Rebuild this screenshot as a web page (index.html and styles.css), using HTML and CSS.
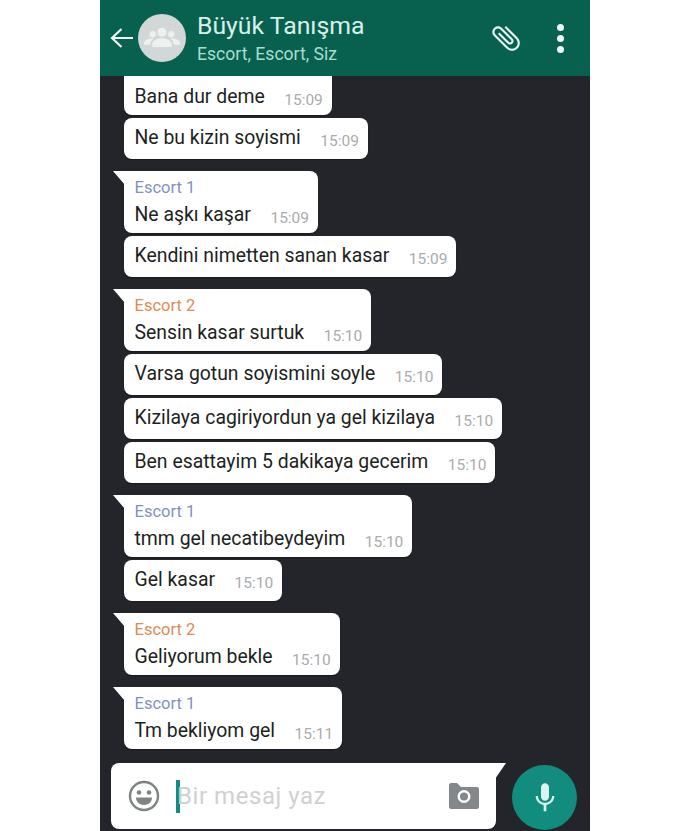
FILE: index.html
```html
<!DOCTYPE html>
<html lang="en">
<head>
    <meta charset="UTF-8">
    <title>Büyük Tanışma</title>
    <link rel="stylesheet" href="styles.css">
</head>
<body>
    <div class="phone">
        <header class="topbar">
            <svg class="back" viewBox="0 0 24 24" fill="none" stroke="currentColor" stroke-width="2.2">
                <path d="M23 12H2M11.500 3L2 12l9.500 9"></path>
            </svg>
            <div class="avatar">
                <svg viewBox="0 0 24 24" fill="currentColor">
                    <circle cx="12" cy="8.200" r="3"></circle>
                    <circle cx="5.800" cy="9.500" r="2.100"></circle>
                    <circle cx="18.200" cy="9.500" r="2.100"></circle>
                    <path d="M5.500 18v-2c0-2 3-3.800 6.500-3.800s6.500 1.800 6.500 3.800v2z"></path>
                    <path d="M0 16.500v-1.300c0-1.600 2.500-2.900 5-2.900.6 0 1.100.1 1.500.2-1.300.8-2.200 1.900-2.300 3.200v.8zM24 16.500v-1.300c0-1.600-2.500-2.900-5-2.900-.6 0-1.100.1-1.500.2 1.300.8 2.200 1.900 2.300 3.200v.8z"></path>
                </svg>
            </div>
            <div class="title-block">
                <div class="title">Büyük Tanışma</div>
                <div class="members">Escort, Escort, Siz</div>
            </div>
            <svg class="clip" viewBox="0 0 24 24" fill="currentColor">
                <path d="M16.500 6v11.500c0 2.210-1.790 4-4 4s-4-1.790-4-4V5c0-1.380 1.120-2.500 2.500-2.500s2.500 1.120 2.500 2.500v10.500c0 .55-.45 1-1 1s-1-.45-1-1V6H10v9.500c0 1.380 1.120 2.500 2.500 2.500s2.500-1.120 2.500-2.500V5c0-2.210-1.790-4-4-4S7 2.790 7 5v12.500c0 3.040 2.460 5.500 5.500 5.500s5.500-2.460 5.500-5.500V6h-1.500z"></path>
            </svg>
            <div class="dots"><span></span><span></span><span></span></div>
        </header>

        <main class="chat">
            <div class="msg first">
                <span class="text">Bana dur deme</span><span class="time">15:09</span>
            </div>
            <div class="msg">
                <span class="text">Ne bu kizin soyismi</span><span class="time">15:09</span>
            </div>

            <div class="msg named new-group">
                <div class="name blue">Escort 1</div>
                <div class="line"><span class="text">Ne aşkı kaşar</span><span class="time">15:09</span></div>
            </div>
            <div class="msg">
                <span class="text">Kendini nimetten sanan kasar</span><span class="time">15:09</span>
            </div>

            <div class="msg named new-group">
                <div class="name orange">Escort 2</div>
                <div class="line"><span class="text">Sensin kasar surtuk</span><span class="time">15:10</span></div>
            </div>
            <div class="msg">
                <span class="text">Varsa gotun soyismini soyle</span><span class="time">15:10</span>
            </div>
            <div class="msg">
                <span class="text">Kizilaya cagiriyordun ya gel kizilaya</span><span class="time">15:10</span>
            </div>
            <div class="msg">
                <span class="text">Ben esattayim 5 dakikaya gecerim</span><span class="time">15:10</span>
            </div>

            <div class="msg named new-group">
                <div class="name blue">Escort 1</div>
                <div class="line"><span class="text">tmm gel necatibeydeyim</span><span class="time">15:10</span></div>
            </div>
            <div class="msg">
                <span class="text">Gel kasar</span><span class="time">15:10</span>
            </div>

            <div class="msg named new-group">
                <div class="name orange">Escort 2</div>
                <div class="line"><span class="text">Geliyorum bekle</span><span class="time">15:10</span></div>
            </div>

            <div class="msg named new-group">
                <div class="name blue">Escort 1</div>
                <div class="line"><span class="text">Tm bekliyom gel</span><span class="time">15:11</span></div>
            </div>
        </main>

        <footer class="composer">
            <div class="input">
                <svg class="smiley" viewBox="0 0 32 32">
                    <circle cx="16" cy="16" r="14" fill="none" stroke="currentColor" stroke-width="2.400"></circle>
                    <circle cx="11" cy="12.500" r="2.300" fill="currentColor"></circle>
                    <circle cx="21" cy="12.500" r="2.300" fill="currentColor"></circle>
                    <path d="M8 17.500h16c0 4.500-3.500 7.500-8 7.500s-8-3-8-7.500z" fill="currentColor"></path>
                </svg>
                <div class="field">
                    <span class="caret"></span>
                    <span class="placeholder">Bir mesaj yaz</span>
                </div>
                <svg class="camera" viewBox="0 0 30 26">
                    <path fill-rule="evenodd" fill="currentColor" d="M2 26a2 2 0 0 1-2-2V2a2 2 0 0 1 2-2h6l4 4h16a2 2 0 0 1 2 2v18a2 2 0 0 1-2 2zM15 20a6.500 6.500 0 1 0 0-13 6.500 6.500 0 0 0 0 13z"></path>
                    <circle cx="15" cy="13.500" r="4" fill="currentColor"></circle>
                </svg>
            </div>
            <div class="mic">
                <svg viewBox="0 0 24 24" fill="currentColor">
                    <path d="M12 14c1.660 0 3-1.340 3-3V4c0-1.660-1.340-3-3-3S9 2.340 9 4v7c0 1.660 1.340 3 3 3z"></path>
                    <path d="M17.300 10.500c0 3-2.540 5.100-5.300 5.100s-5.300-2.100-5.300-5.100H5c0 3.420 2.720 6.240 6 6.720V22h2v-4.780c3.280-.48 6-3.300 6-6.720h-1.700z"></path>
                </svg>
            </div>
        </footer>
    </div>
</body>
</html>
```

FILE: styles.css
```css
* {
    margin: 0;
    padding: 0;
    box-sizing: border-box;
    font-family: Roboto, 'Liberation Sans', sans-serif;
}

html, body {
    height: 100%;
    background: #fff;
    overflow: hidden;
}

.phone {
    width: 490px;
    height: 831px;
    margin-left: 100px;
    display: flex;
    flex-direction: column;
    background: #23252a;
}

/* top bar */
.topbar {
    height: 76px;
    flex-shrink: 0;
    display: flex;
    align-items: center;
    background: #08614f;
    color: #fff;
}

.back {
    width: 24px;
    height: 24px;
    margin-left: 10px;
    flex-shrink: 0;
    color: #eef6f4;
}

.avatar {
    width: 48px;
    height: 48px;
    margin-left: 4px;
    border-radius: 50%;
    background: #d2d8d7;
    color: #eef1f0;
    display: flex;
    align-items: center;
    justify-content: center;
}

.avatar svg {
    width: 36px;
    height: 36px;
}

.title-block {
    flex: 1;
    margin-left: 11px;
    margin-top: -1px;
}

.title {
    font-size: 24.8px;
    line-height: 30px;
    color: #d9f0ea;
}

.members {
    font-size: 17.6px;
    line-height: 22px;
    margin-top: 2px;
    color: #a9dccf;
}

.clip {
    width: 34px;
    height: 34px;
    margin-right: 34px;
    color: #e6f3f0;
    transform: rotate(-45deg);
}

.dots {
    display: flex;
    flex-direction: column;
    gap: 4px;
    margin-right: 26px;
}

.dots span {
    width: 7px;
    height: 7px;
    border-radius: 50%;
    background: #eef6f4;
}

/* messages */
.chat {
    flex: 1;
    display: flex;
    flex-direction: column;
    align-items: flex-start;
    gap: 3px;
    padding-left: 24px;
}

.msg {
    position: relative;
    display: flex;
    align-items: flex-end;
    height: 41px;
    padding: 0 9px 0 10.500px;
    background: #fff;
    border-radius: 8px;
    box-shadow: 0 1px 1px rgba(0, 0, 0, 0.3);
}

.msg.first {
    height: 39px;
    border-radius: 0 0 8px 8px;
}

.msg.named {
    display: block;
    height: 62px;
    border-top-left-radius: 0;
}

.msg.named::before {
    content: '';
    position: absolute;
    left: -11px;
    top: 0;
    width: 12px;
    height: 14px;
    background: #fff;
    clip-path: polygon(0 0, 100% 0, 100% 100%);
}

.new-group {
    margin-top: 9px;
}

.name {
    font-size: 16.5px;
    line-height: 20px;
    padding-top: 7px;
    height: 26px;
}

.name.blue {
    color: #7f92c0;
}

.name.orange {
    color: #e08a56;
}

.line {
    display: flex;
    align-items: flex-end;
    height: 36px;
}

.text {
    font-size: 19.4px;
    line-height: 24px;
    color: #1d1f22;
    margin-bottom: 9px;
    margin-right: 19.500px;
}

.time {
    font-size: 15.5px;
    line-height: 20px;
    color: #a9abad;
    margin-bottom: 8px;
}

.first .text,
.named .text {
    margin-bottom: 6px;
}

.first .time,
.named .time {
    margin-bottom: 5px;
}

/* bottom input */
.composer {
    flex-shrink: 0;
    display: flex;
    align-items: flex-start;
    height: 68px;
    padding-left: 11px;
}

.input {
    position: relative;
    display: flex;
    align-items: center;
    width: 385px;
    height: 66px;
    background: #fff;
    border-radius: 8px 0 8px 8px;
}

.input::after {
    content: '';
    position: absolute;
    right: -10px;
    top: 0;
    width: 11px;
    height: 16px;
    background: #fff;
    clip-path: polygon(0 0, 100% 0, 0 100%);
}

.smiley {
    width: 32px;
    height: 32px;
    margin-left: 17px;
    color: #7f8482;
    flex-shrink: 0;
}

.field {
    flex: 1;
    display: flex;
    align-items: center;
    margin-left: 16px;
}

.caret {
    width: 4px;
    height: 33px;
    background: #128c7e;
    flex-shrink: 0;
}

.placeholder {
    font-size: 24px;
    color: #cfd1d1;
    margin-left: -3px;
    letter-spacing: 0.55px;
}

.camera {
    width: 30px;
    height: 26px;
    margin-right: 17px;
    color: #85888a;
    flex-shrink: 0;
}

.mic {
    width: 65px;
    height: 65px;
    margin-left: 16px;
    margin-top: 2px;
    border-radius: 50%;
    background: #128c7e;
    color: #d9f5ee;
    display: flex;
    align-items: center;
    justify-content: center;
}

.mic svg {
    width: 32px;
    height: 32px;
}
```
